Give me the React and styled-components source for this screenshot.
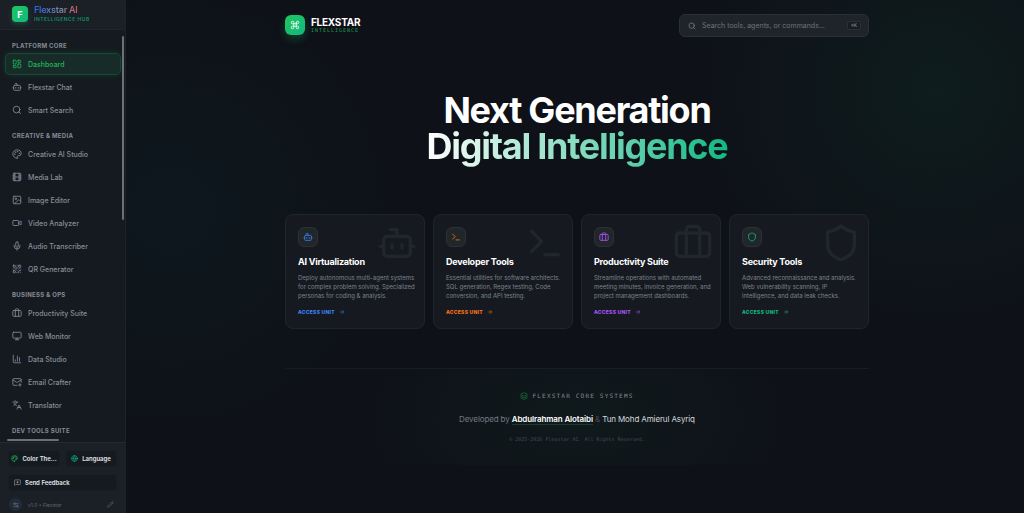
import React from "react";
import styled, { createGlobalStyle } from "styled-components";
import {
  ArrowLeftRight,
  ArrowRight,
  Bot,
  Briefcase,
  ChartColumn,
  Command,
  Film,
  Globe,
  Image,
  Languages,
  Layers,
  LayoutDashboard,
  MailPlus,
  MessageSquarePlus,
  Mic,
  Monitor,
  Palette,
  Pencil,
  QrCode,
  Search,
  Shield,
  Terminal,
  Video,
} from "lucide-react";

const sections = [
  {
    title: "Platform Core",
    items: [
      { label: "Dashboard", icon: LayoutDashboard, active: true },
      { label: "Flexstar Chat", icon: Bot },
      { label: "Smart Search", icon: Search },
    ],
  },
  {
    title: "Creative & Media",
    items: [
      { label: "Creative AI Studio", icon: Palette },
      { label: "Media Lab", icon: Film },
      { label: "Image Editor", icon: Image },
      { label: "Video Analyzer", icon: Video },
      { label: "Audio Transcriber", icon: Mic },
      { label: "QR Generator", icon: QrCode },
    ],
  },
  {
    title: "Business & Ops",
    items: [
      { label: "Productivity Suite", icon: Briefcase },
      { label: "Web Monitor", icon: Monitor },
      { label: "Data Studio", icon: ChartColumn },
      { label: "Email Crafter", icon: MailPlus },
      { label: "Translator", icon: Languages },
    ],
  },
  { title: "Dev Tools Suite", items: [] },
];

const units = [
  {
    title: "AI Virtualization",
    text: "Deploy autonomous multi-agent systems for complex problem solving. Specialized personas for coding & analysis.",
    icon: Bot,
    color: "#3b82f6",
  },
  {
    title: "Developer Tools",
    text: "Essential utilities for software architects. SQL generation, Regex testing, Code conversion, and API testing.",
    icon: Terminal,
    color: "#f97316",
  },
  {
    title: "Productivity Suite",
    text: "Streamline operations with automated meeting minutes, invoice generation, and project management dashboards.",
    icon: Briefcase,
    color: "#a855f7",
  },
  {
    title: "Security Tools",
    text: "Advanced reconnaissance and analysis. Web vulnerability scanning, IP intelligence, and data leak checks.",
    icon: Shield,
    color: "#10b981",
  },
];

const App = () => {
  return (
    <>
      <GlobalStyle />
      <Shell>
        <Sidebar>
          <Brand>
            <BrandMark>F</BrandMark>
            <div>
              <BrandName>Flexstar AI</BrandName>
              <BrandTag>Intelligence Hub</BrandTag>
            </div>
          </Brand>

          <Nav>
            {sections.map((section) => (
              <NavSection key={section.title}>
                <h2>{section.title}</h2>
                {section.items.map(({ label, icon: Icon, active }) => (
                  <NavItem key={label} href="#" $active={active}>
                    <Icon size={10} />
                    {label}
                  </NavItem>
                ))}
              </NavSection>
            ))}
            <ThumbY />
            <ThumbX />
          </Nav>

          <SidebarFooter>
            <ButtonRow>
              <FooterButton $centered>
                <Palette size={7} color="#22c55e" />
                Color The...
              </FooterButton>
              <FooterButton $centered>
                <Globe size={7} color="#10b981" />
                Language
              </FooterButton>
            </ButtonRow>
            <FooterButton>
              <MessageSquarePlus size={7} color="#9ca3af" />
              Send Feedback
            </FooterButton>
            <Version>
              <Avatar>
                <ArrowLeftRight size={6} />
              </Avatar>
              <span>v1.0 • Flexstar</span>
              <Pencil size={7} />
            </Version>
          </SidebarFooter>
        </Sidebar>

        <Main>
          <Content>
            <TopBar>
              <Logo>
                <LogoMark>
                  <Command size={10} />
                </LogoMark>
                <div>
                  <LogoName>FLEXSTAR</LogoName>
                  <LogoTag>INTELLIGENCE</LogoTag>
                </div>
              </Logo>
              <SearchBox>
                <Search size={8} />
                <input
                  type="text"
                  aria-label="Search"
                  placeholder="Search tools, agents, or commands..."
                />
                <kbd>⌘K</kbd>
              </SearchBox>
            </TopBar>

            <Hero>
              Next Generation
              <br />
              <span>Digital Intelligence</span>
            </Hero>

            <Cards>
              {units.map(({ title, text, icon: Icon, color }) => (
                <Card key={title}>
                  <Ghost>
                    <Icon size={40} />
                  </Ghost>
                  <CardIcon $color={color}>
                    <Icon size={10} />
                  </CardIcon>
                  <h3>{title}</h3>
                  <p>{text}</p>
                  <Access href="#" $color={color}>
                    ACCESS UNIT <ArrowRight size={6} />
                  </Access>
                </Card>
              ))}
            </Cards>

            <Footer>
              <Systems>
                <Layers size={8} />
                FLEXSTAR CORE SYSTEMS
              </Systems>
              <Credits>
                Developed by <strong>Abdulrahman Alotaibi</strong> <i>&amp;</i>{" "}
                <span>Tun Mohd Amierul Asyriq</span>
              </Credits>
              <Copyright>© 2025-2026 Flexstar AI. All Rights Reserved.</Copyright>
            </Footer>
          </Content>
        </Main>
      </Shell>
    </>
  );
};

export default App;

const GlobalStyle = createGlobalStyle`
  * {
    box-sizing: border-box;
    margin: 0;
    padding: 0;
  }

  body {
    background-color: #0e1118;
    font-family: Inter, "Liberation Sans", sans-serif;
    color: #fff;
  }

  a {
    text-decoration: none;
  }

  button,
  input {
    font-family: inherit;
  }

  svg {
    flex-shrink: 0;
  }
`;

const Shell = styled.div`
  display: flex;
  height: 100vh;
  overflow: hidden;
`;

const Sidebar = styled.aside`
  display: flex;
  flex-direction: column;
  flex-shrink: 0;
  width: 126px;
  background-color: #151a21;
  border-right: 1px solid #1d2329;
`;

const Brand = styled.div`
  display: flex;
  align-items: center;
  gap: 6px;
  height: 30px;
  padding: 0 0 1px 12px;
  background-color: #1b2027;
  border-bottom: 1px solid #20262d;
`;

const BrandMark = styled.div`
  display: flex;
  align-items: center;
  justify-content: center;
  width: 16px;
  height: 16px;
  border-radius: 4px;
  background: linear-gradient(135deg, #22c55e, #10b981);
  box-shadow: 0 2px 5px rgba(34, 197, 94, 0.25);
  font-size: 9px;
  font-weight: 700;
`;

const BrandName = styled.div`
  width: max-content;
  font-size: 9px;
  line-height: 11px;
  font-weight: 600;
  letter-spacing: -0.025em;
  background: linear-gradient(90deg, #2563eb, #7d8aa8 60%, #c9585c);
  background-clip: text;
  color: transparent;
`;

const BrandTag = styled.div`
  font-size: 5px;
  line-height: 9px;
  font-weight: 600;
  letter-spacing: 0.1em;
  text-transform: uppercase;
  color: #0e8f63;
`;

const Nav = styled.nav`
  position: relative;
  flex: 1;
  min-height: 0;
  overflow: hidden;
  padding: 11px 4px 0 5px;
`;

const NavSection = styled.section`
  display: flex;
  flex-direction: column;
  gap: 1px;
  margin-bottom: 10px;

  h2 {
    padding-left: 7px;
    margin-bottom: 1px;
    font-size: 6px;
    line-height: 10px;
    font-weight: 700;
    letter-spacing: 0.05em;
    text-transform: uppercase;
    color: #858b95;
  }
`;

const NavItem = styled.a`
  display: flex;
  align-items: center;
  gap: 6px;
  height: 22px;
  padding: 0 6px;
  border: 1px solid ${({ $active }) => ($active ? "#17492f" : "transparent")};
  border-radius: 5px;
  background-color: ${({ $active }) => ($active ? "#172b28" : "transparent")};
  box-shadow: ${({ $active }) =>
    $active ? "0 0 6px rgba(34, 197, 94, 0.15)" : "none"};
  color: ${({ $active }) => ($active ? "#22b45a" : "#878d97")};
  font-size: 7px;
  font-weight: 500;
`;

const ThumbY = styled.div`
  position: absolute;
  top: 6px;
  right: 1px;
  width: 2px;
  height: 184px;
  border-radius: 1px;
  background-color: #6d7074;
`;

const ThumbX = styled.div`
  position: absolute;
  bottom: 1px;
  left: 7px;
  width: 52px;
  height: 2px;
  border-radius: 1px;
  background-color: #6d7074;
`;

const SidebarFooter = styled.div`
  display: flex;
  flex-direction: column;
  gap: 7px;
  height: 71px;
  padding: 7px 8px 0;
  overflow: hidden;
  background-color: #1b2027;
  border-top: 1px solid #242a31;
`;

const ButtonRow = styled.div`
  display: grid;
  grid-template-columns: 1fr 1fr;
  gap: 5px;
`;

const FooterButton = styled.button`
  display: flex;
  align-items: center;
  justify-content: ${({ $centered }) => ($centered ? "center" : "flex-start")};
  gap: 4px;
  min-width: 0;
  height: 17px;
  padding: 0 ${({ $centered }) => ($centered ? "2px" : "5px")};
  border: 1px solid #191e25;
  border-radius: 4px;
  background-color: #151a20;
  color: #e2e5ea;
  font-size: 6px;
  font-weight: 600;
  white-space: nowrap;
`;

const Version = styled.div`
  display: flex;
  align-items: center;
  gap: 6px;
  padding: 0 3px 0 1px;
  color: #5f656e;
  font-size: 5px;

  span {
    flex: 1;
  }
`;

const Avatar = styled.div`
  display: flex;
  align-items: center;
  justify-content: center;
  width: 13px;
  height: 13px;
  border-radius: 50%;
  background-color: #212c38;
  color: #8a95a3;
`;

const Main = styled.main`
  flex: 1;
  min-width: 0;
  padding-left: 4px;
  overflow: hidden;
  background:
    radial-gradient(circle at 90% 90px, rgba(16, 70, 48, 0.22), transparent 240px),
    radial-gradient(circle at 5% 210px, rgba(12, 50, 52, 0.22), transparent 220px),
    #0e1118;
`;

const Content = styled.div`
  width: 100%;
  max-width: 584px;
  margin: 0 auto;
`;

const TopBar = styled.header`
  display: flex;
  align-items: flex-start;
  justify-content: space-between;
  padding-top: 14px;
`;

const Logo = styled.div`
  display: flex;
  align-items: center;
  gap: 6px;
  padding-top: 1px;
`;

const LogoMark = styled.div`
  display: flex;
  align-items: center;
  justify-content: center;
  width: 20px;
  height: 20px;
  border-radius: 6px;
  background: linear-gradient(135deg, #22c55e, #10b981);
  box-shadow: 0 4px 8px rgba(34, 197, 94, 0.25);
`;

const LogoName = styled.div`
  font-size: 10px;
  line-height: 10px;
  font-weight: 700;
  letter-spacing: -0.025em;
`;

const LogoTag = styled.div`
  font-family: "DejaVu Sans Mono", monospace;
  font-size: 5px;
  line-height: 6px;
  letter-spacing: 0.2em;
  color: #1a9c4b;
`;

const SearchBox = styled.label`
  display: flex;
  align-items: center;
  gap: 6px;
  width: 190px;
  height: 23px;
  padding: 0 7px 0 8px;
  border: 1px solid #2b3037;
  border-radius: 6px;
  background-color: #1f242b;
  color: #868c95;

  input {
    flex: 1;
    min-width: 0;
    border: none;
    outline: none;
    background: transparent;
    color: #fff;
    font-size: 7px;
  }

  input::placeholder {
    color: #6c727c;
  }

  kbd {
    padding: 0 3px;
    border: 1px solid #2b3037;
    border-radius: 2px;
    background-color: #181d22;
    font-family: "DejaVu Sans Mono", monospace;
    font-size: 5px;
    line-height: 7px;
  }
`;

const Hero = styled.h1`
  margin-top: 55px;
  text-align: center;
  font-size: 36px;
  line-height: 36px;
  font-weight: 700;
  letter-spacing: -0.035em;

  span {
    display: inline-block;
    padding: 0 2px 8px;
    background: linear-gradient(90deg, #fff, #10b981);
    background-clip: text;
    color: transparent;
  }
`;

const Cards = styled.div`
  display: grid;
  grid-template-columns: repeat(4, 1fr);
  gap: 8px;
  margin-top: 42px;
`;

const Card = styled.article`
  position: relative;
  min-height: 115px;
  padding: 12px 5px 11px 12px;
  border: 1px solid #20252b;
  border-radius: 8px;
  background-color: #161a20;

  h3 {
    margin-top: 9px;
    font-size: 9px;
    line-height: 12px;
    font-weight: 700;
    letter-spacing: -0.025em;
  }

  p {
    margin-top: 5px;
    font-size: 6px;
    line-height: 9px;
    color: #7b828d;
  }
`;

const Ghost = styled.div`
  position: absolute;
  top: 8px;
  right: 7px;
  height: 40px;
  color: #21262c;
`;

const CardIcon = styled.div`
  display: flex;
  align-items: center;
  justify-content: center;
  width: 20px;
  height: 20px;
  border: 1px solid #2c3136;
  border-radius: 6px;
  background-color: #212629;
  color: ${({ $color }) => $color};
`;

const Access = styled.a`
  display: flex;
  align-items: center;
  gap: 4px;
  margin-top: 8px;
  font-size: 5px;
  line-height: 8px;
  font-weight: 800;
  letter-spacing: 0.05em;
  color: ${({ $color }) => $color};
`;

const Footer = styled.footer`
  display: flex;
  flex-direction: column;
  align-items: center;
  margin-top: 39px;
  padding: 22px 0;
  border-top: 1px solid #181d23;
  background: radial-gradient(ellipse 220px 130px at 50% 50%, rgba(22, 60, 44, 0.2), transparent);
`;

const Systems = styled.div`
  display: flex;
  align-items: center;
  gap: 4px;
  font-family: "DejaVu Sans Mono", monospace;
  font-size: 6px;
  line-height: 10px;
  letter-spacing: 0.2em;
  color: #858b92;

  svg {
    color: #16803d;
  }
`;

const Credits = styled.p`
  margin-top: 12px;
  font-size: 8px;
  line-height: 12px;
  letter-spacing: -0.015em;
  color: #737a84;

  strong {
    border-bottom: 1px solid #1e3a32;
    font-weight: 600;
    color: #fff;
  }

  i {
    font-style: normal;
    color: #464c54;
  }

  span {
    color: #d5d8dc;
  }
`;

const Copyright = styled.p`
  margin-top: 10px;
  font-family: "DejaVu Sans Mono", monospace;
  font-size: 5px;
  line-height: 8px;
  color: #454b51;
`;
